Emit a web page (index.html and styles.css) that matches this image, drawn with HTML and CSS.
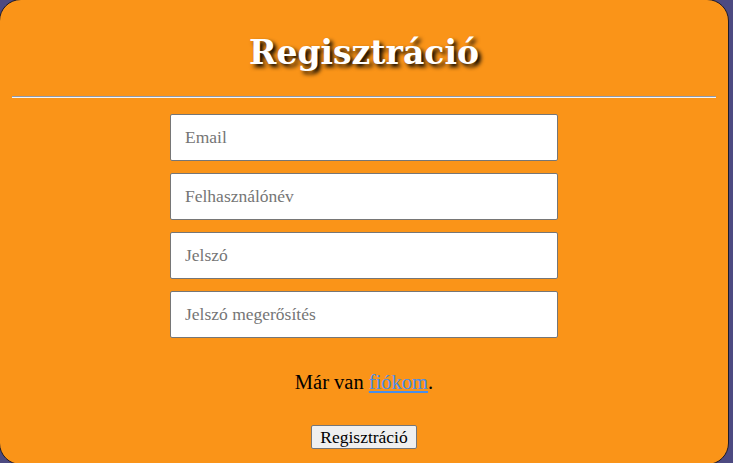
FILE: index.html
```html
<!DOCTYPE html>
<html lang="hu">
<head>
<meta charset="utf-8">
<title>Regisztráció</title>
<link rel="stylesheet" href="styles.css">
</head>
<body>
<div class="card">
  <h1 class="title">Regisztráció</h1>
  <hr class="divider">
  <form class="form">
    <input class="field" type="email" placeholder="Email">
    <input class="field" type="text" placeholder="Felhasználónév">
    <input class="field" type="password" placeholder="Jelszó">
    <input class="field" type="password" placeholder="Jelszó megerősítés">
    <p class="login">Már van <a href="#" class="login-link">fiókom</a>.</p>
    <button class="submit" type="button">Regisztráció</button>
  </form>
</div>
</body>
</html>
```
FILE: styles.css
```css
html, body {
  margin: 0;
  padding: 0;
  background: #4d4a81;
  overflow: hidden;
}
.card {
  box-sizing: border-box;
  width: 730px;
  height: 466px;
  margin: -1px 0 0 -1px;
  border: 1px solid #1b1a2a;
  border-radius: 22px;
  background: #fa9418;
  display: flex;
  flex-direction: column;
  align-items: center;
}
.title {
  margin: 33px 0 0;
  font-family: "DejaVu Serif", serif;
  font-weight: bold;
  font-size: 33px;
  line-height: 40px;
  color: #fff;
  text-shadow: 3px 3px 4px #000;
}
.divider {
  align-self: stretch;
  margin: 23px 12px 0;
  border: 0;
  border-top: 1px solid #8e9aae;
  border-bottom: 1px solid #f4f4f4;
  height: 0;
}
.form {
  display: flex;
  flex-direction: column;
  align-items: center;
  margin-top: 16px;
}
.field {
  box-sizing: border-box;
  width: 388px;
  height: 47px;
  margin: 0 0 12px;
  padding: 0 14px;
  border: 1px solid #767676;
  border-radius: 2px;
  background: #fff;
  font-family: "Liberation Serif", serif;
  font-size: 17.5px;
  color: #333;
}
.field::placeholder {
  color: #757575;
}
.login {
  margin: 20px 0 0;
  font-family: "Liberation Serif", serif;
  font-size: 20.5px;
  line-height: 24px;
  color: #000;
}
.login-link {
  color: #4a8ee8;
}
.submit {
  margin-top: 31px;
  padding: 1px 8px;
  height: 24px;
  font-family: "Liberation Serif", serif;
  font-size: 17.5px;
  line-height: 20px;
  color: #000;
  background: #efefef;
  border: 1px solid #767676;
  border-radius: 2px;
}
```
